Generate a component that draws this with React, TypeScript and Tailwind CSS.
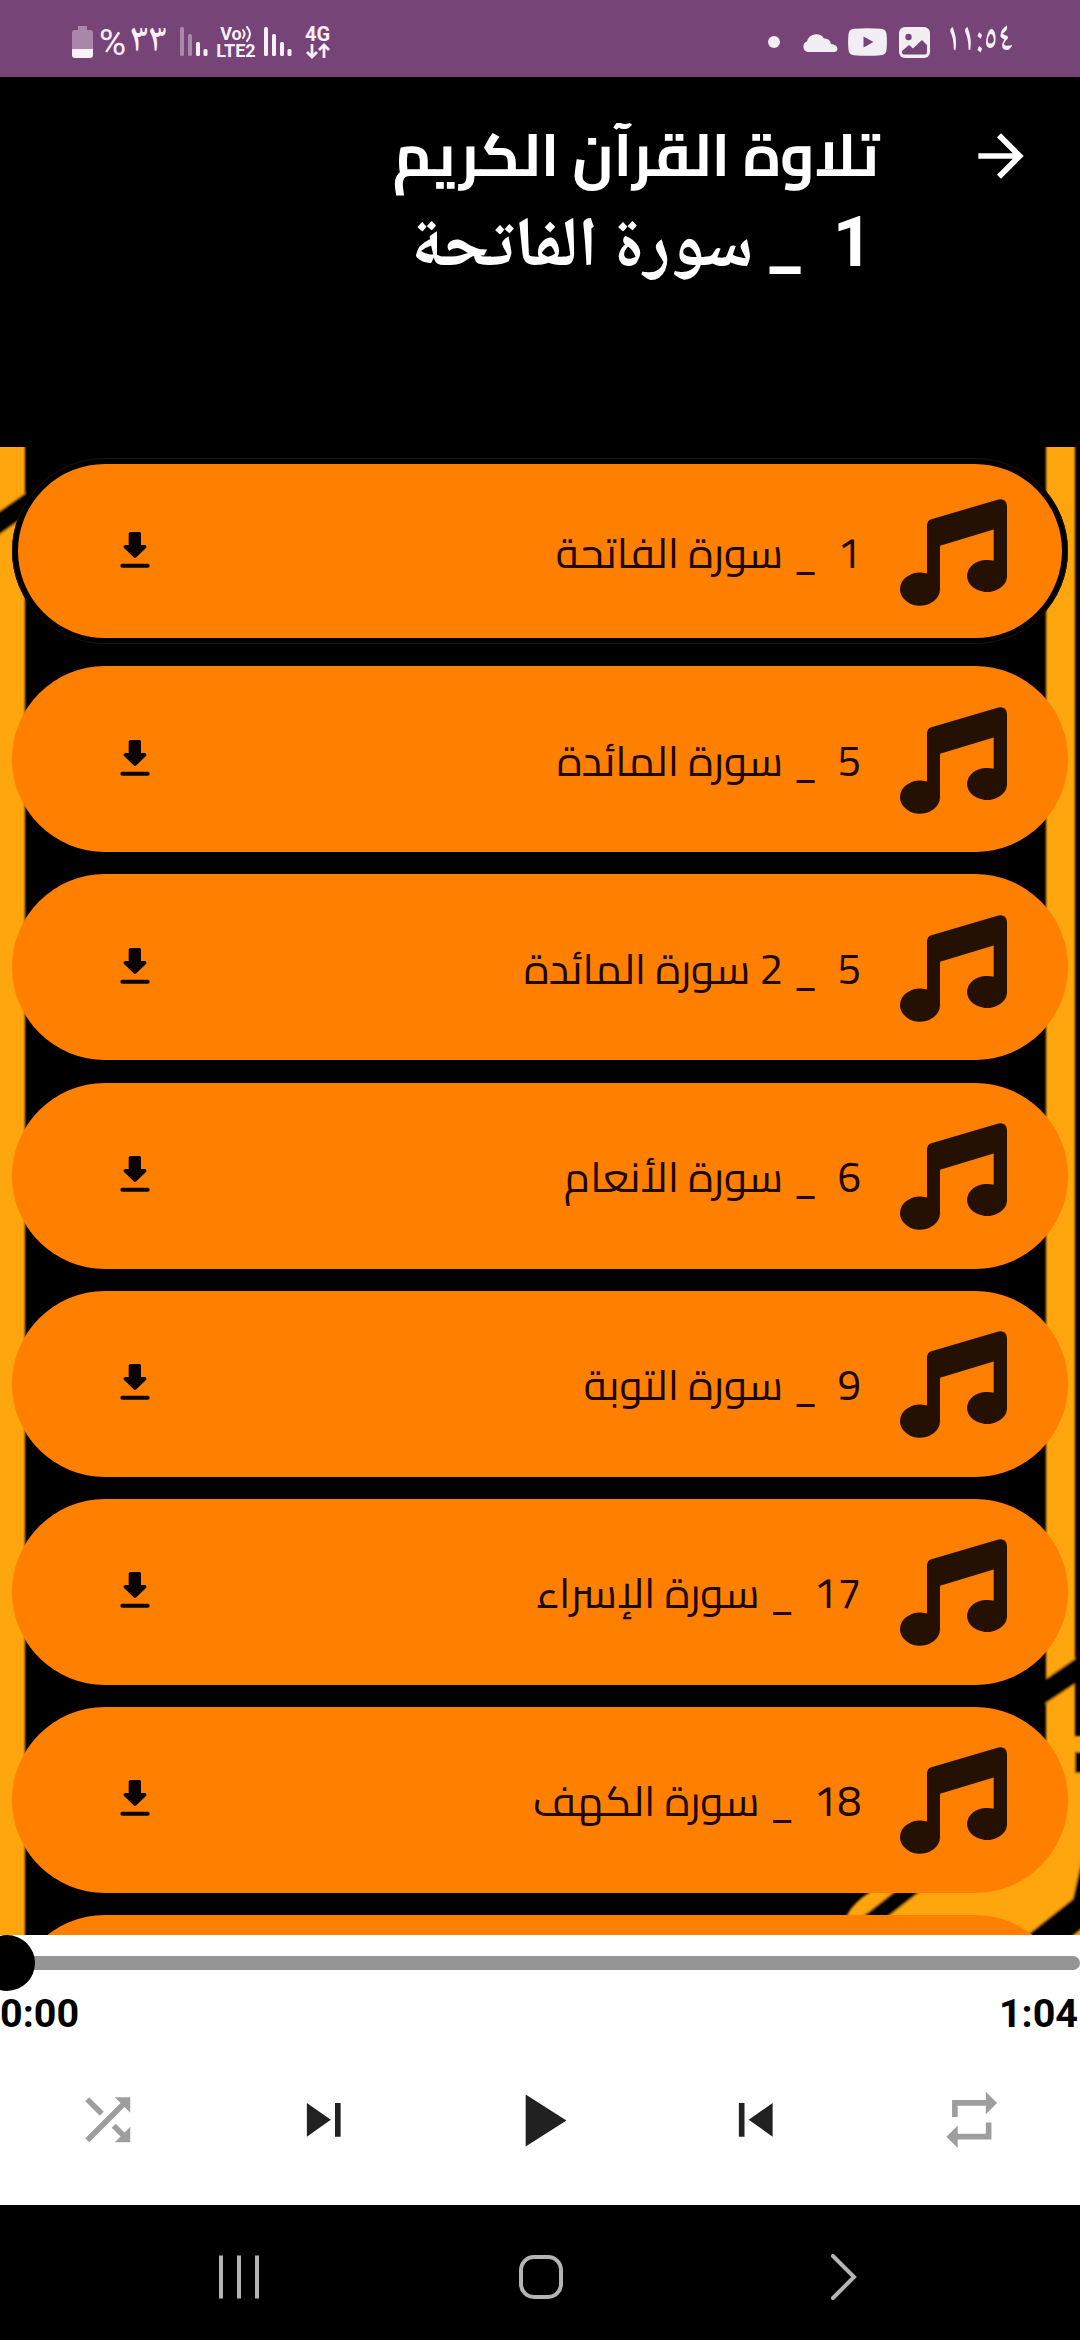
import { MdArrowForward, MdPlayArrow, MdRepeat, MdShuffle, MdSkipNext, MdSkipPrevious } from 'react-icons/md'

const tracks = [
  { id: 1, title: '1  _ سورة الفاتحة' },
  { id: 2, title: '5  _ سورة المائدة' },
  { id: 3, title: '5  _ 2 سورة المائدة' },
  { id: 4, title: '6  _ سورة الأنعام' },
  { id: 5, title: '9  _ سورة التوبة' },
  { id: 6, title: '17  _ سورة الإسراء' },
  { id: 7, title: '18  _ سورة الكهف' },
  { id: 8, title: '' },
]

function SignalBars({ weak }: { weak?: boolean }) {
  return (
    <svg className="h-[30px] w-[28px]" viewBox="0 0 28 30" fill="#fbf0fa">
      <rect x="0" y="0" width="4" height="29" rx="1.5" opacity={weak ? 0.4 : 1} />
      <rect x="8" y="7" width="4" height="22" rx="1.5" opacity={weak ? 0.4 : 1} />
      <rect x="16" y="15" width="4" height="14" rx="1.5" />
      <rect x="23.5" y="22" width="4" height="7" rx="1.5" />
    </svg>
  )
}

function StatusBar() {
  return (
    <div dir="ltr" className="flex h-[77px] items-center justify-between bg-[#764477] pt-[7px] pr-[72px] pl-[72px] text-[#fbf0fa]">
      <div className="flex items-center">
        {/* Battery */}
        <svg className="h-[32px] w-[21px]" viewBox="0 0 21 32">
          <path d="M6 0h9v4h3a3 3 0 0 1 3 3v16H0V7a3 3 0 0 1 3-3h3z" fill="#a986aa" />
          <path d="M0 23h21v6a3 3 0 0 1-3 3H3a3 3 0 0 1-3-3z" fill="#fbf0fa" />
        </svg>
        <span className="ml-[6px] w-[28px] font-['Roboto'] text-[37px] leading-none">%</span>
        <span className="ml-[3px] w-[35px] font-['Noto_Naskh_Arabic','DejaVu_Sans',sans-serif] text-[40px] leading-[40px] font-medium">٣٣</span>
        <div className="ml-[15px] flex">
          <SignalBars weak />
        </div>
        {/* VoLTE */}
        <div className="ml-[8px] flex w-[40px] flex-col items-center font-['Roboto'] text-[18px] leading-[17px] font-bold">
          <div className="flex items-center">
            <span>Vo</span>
            <svg className="h-[16px] w-[10px]" viewBox="0 0 10 16" fill="none" stroke="currentColor" strokeWidth="2">
              <path d="M1 4q3 4 0 8M5 1q6 7 0 14" strokeLinecap="round" />
            </svg>
          </div>
          <span>LTE2</span>
        </div>
        <div className="ml-[8px] flex">
          <SignalBars />
        </div>
        {/* Mobile data */}
        <div className="ml-[12px] flex w-[27px] flex-col items-center font-['Roboto'] text-[20px] leading-[17px] font-bold">
          <span>4G</span>
          <svg className="h-[16px] w-[24px]" viewBox="0 0 24 16" fill="none" stroke="currentColor" strokeWidth="2.8">
            <path d="M6 1v13M1 9l5 5 5-5M18 15V2M13 7l5-5 5 5" />
          </svg>
        </div>
      </div>

      <div className="flex items-center">
        <span className="mr-[22px] h-3 w-3 rounded-full bg-[#f3eef3]" />
        {/* Cloud */}
        <svg className="mr-[10px] h-[20px] w-[36px]" viewBox="0 0 36 20" fill="#f3eef3">
          <path d="M5.500 20a5.500 5.500 0 0 1-.5-10.500A9.500 9.500 0 0 1 22 6.500a6.500 6.500 0 0 1 7 5.500q6 .5 6.500 5-.2 3-3.500 3z" />
        </svg>
        {/* Video */}
        <svg className="mr-[12px] h-[28px] w-[39px]" viewBox="0 0 39 28">
          <path d="M6 .8q13.500-1.300 27 0 5 .5 5.500 5.200.8 8 0 16-.5 4.700-5.500 5.200-13.500 1.300-27 0-5-.5-5.500-5.200-.8-8 0-16Q1 1.300 6 .8z" fill="#f3eef3" />
          <path d="M15.500 8.500v11l10-5.500z" fill="#764477" />
        </svg>
        {/* Photo */}
        <svg className="mr-[16px] h-[31px] w-[31px]" viewBox="0 0 31 31">
          <rect width="31" height="31" rx="6" fill="#f3eef3" />
          <circle cx="9.500" cy="10" r="3.200" fill="#764477" />
          <path d="M3 24l7-6 4 3.500 9-8.500 5 5v7.500q0 2-2 2H5q-2 0-2-2z" fill="#764477" />
        </svg>
        <span className="w-[62px] origin-left scale-x-[0.8] font-['Noto_Naskh_Arabic','DejaVu_Sans',sans-serif] text-[39px] leading-[40px] font-semibold tracking-[-2.6px] whitespace-nowrap">١١:٥٤</span>
      </div>
    </div>
  )
}

function Header() {
  return (
    <header className="flex h-[370px] bg-black pr-[45px] text-white">
      <MdArrowForward className="mt-[45px] h-[68px] w-[68px] shrink-0" />
      <div className="mr-[88px] pt-[34px] font-bold">
        <h1 className="font-['Cairo','DejaVu_Sans',sans-serif] text-[59.2px] leading-[88px]">تلاوة القرآن الكريم</h1>
        <h2 className="-mt-px pr-[6px] font-['Roboto','Noto_Naskh_Arabic','DejaVu_Sans',sans-serif] text-[70px] leading-[88px] [word-spacing:-1.3px] whitespace-pre">1  _ سورة الفاتحة</h2>
      </div>
    </header>
  )
}

// Black wallpaper with amber stripes behind the list
function Wallpaper() {
  return (
    <svg className="absolute inset-0 h-full w-full" viewBox="0 447 1080 1488" preserveAspectRatio="none">
      <defs>
        <filter id="soft" x="-5%" y="-5%" width="110%" height="110%">
          <feGaussianBlur stdDeviation="1.3" />
        </filter>
      </defs>
      <rect y="447" width="1080" height="1488" fill="#000" />
      <g filter="url(#soft)">
        <path d="M-20 420H25V1960H-20z" fill="#ffa50a" />
        <path d="M-10 518L30 490V513L-10 541z" fill="#000" />
        <path d="M1046 420H1075V1736H1100V1960H825L847 1915Q853 1903 870 1892L1046 1760z" fill="#ffa50a" />
        <path d="M1040 1683L1085 1652V1677L1040 1707z" fill="#000" />
        <path d="M1075 1752H1100V1773H1075z" fill="#000" />
        <path d="M1100 1800L1080 1868 1073 1899 1015 1945H1062L1100 1914z" fill="#000" />
        <path d="M893 1893L833 1940H858L918 1893 960 1860H935z" fill="#000" />
      </g>
    </svg>
  )
}

function MusicIcon() {
  return (
    <svg className="h-[107px] w-[107px]" viewBox="0 0 321 320" fill="#241103">
      <path d="M81 77Q82 64 94 60L295 1Q318-3 321 19V234A60 48 0 1 1 281 185V91L120 140V270A60 50 0 1 1 81 223z" />
    </svg>
  )
}

function DownloadIcon() {
  return (
    <svg className="h-[36px] w-[30px]" viewBox="0 0 90 108" fill="#0a0402">
      <path d="M32 0H58Q63 0 63 5V39H74Q82 41 78 48L49 76Q45 80 41 76L12 48Q8 41 16 39H26V5Q26 0 32 0z" />
      <rect x="1" y="95" width="88" height="12" rx="6" />
    </svg>
  )
}

function TrackList() {
  return (
    <main className="relative h-[1488px] overflow-hidden">
      <Wallpaper />
      <ul className="relative flex flex-col gap-[22.1px] px-[12px] pt-[11.3px]">
        {tracks.map((track, i) => (
          <li
            key={track.id}
            className={
              i === 0
                ? 'flex h-[186px] shrink-0 items-center rounded-full border-6 border-black bg-[#ff8000] pt-[2px] pr-[55px] pl-[102px] outline-1 -outline-offset-1 outline-[#1c1408]'
                : 'flex h-[186px] shrink-0 items-center rounded-full bg-[#ff8000] pt-[2px] pr-[61px] pl-[108px]'
            }
          >
            <MusicIcon />
            <span className="mt-[1px] mr-[39px] grow font-['Cairo','DejaVu_Sans',sans-serif] text-[42.1px] leading-[80px] whitespace-pre text-[#1d0700]">{track.title}</span>
            <div className="mb-[5px]">
              <DownloadIcon />
            </div>
          </li>
        ))}
      </ul>
    </main>
  )
}

function Player() {
  return (
    <section dir="ltr" className="h-[270px] overflow-hidden bg-white">
      {/* Seek bar */}
      <div className="flex h-[56px] items-center">
        <div className="z-10 -ml-[21px] h-[56px] w-[56px] shrink-0 rounded-full bg-black" />
        <div className="-ml-1 h-[14px] grow rounded-r-full bg-[#959595]" />
      </div>
      <div className="flex justify-between pr-[2px] font-['Roboto'] text-[39.500px] leading-[46px] font-bold text-black">
        <span>0:00</span>
        <span>1:04</span>
      </div>
      {/* Controls */}
      <div className="grid h-[166px] grid-cols-5 place-items-center text-[#212121]">
        <MdShuffle className="h-[67.5px] w-[67.5px] text-[#9e9e9e]" />
        <MdSkipNext className="h-[67.5px] w-[67.5px]" />
        <MdPlayArrow className="h-[89px] w-[89px]" />
        <MdSkipPrevious className="h-[67.5px] w-[67.5px]" />
        <MdRepeat className="h-[67.5px] w-[67.5px] text-[#9e9e9e]" />
      </div>
    </section>
  )
}

function NavBar() {
  return (
    <nav dir="ltr" className="flex h-[135px] items-center bg-black pt-[9px] pl-[216px]">
      <svg className="h-[46px] w-[46px]" viewBox="0 0 46 46" stroke="#b4b4b4" strokeWidth="4">
        <path d="M5 1.500V44.500M23 1.500V44.500M41 1.500V44.500" />
      </svg>
      <svg className="ml-[256px] h-[46px] w-[46px]" viewBox="0 0 46 46" fill="none" stroke="#b4b4b4" strokeWidth="4">
        <rect x="3" y="3" width="40" height="40" rx="13" />
      </svg>
      <svg className="ml-[266px] h-[46px] w-[30px]" viewBox="0 0 30 46" fill="none" stroke="#b4b4b4" strokeWidth="4">
        <path d="M3 2L24 23 3 44" strokeLinecap="round" />
      </svg>
    </nav>
  )
}

export default function App() {
  return (
    <div dir="rtl" className="h-[2340px] w-[1080px] overflow-hidden bg-black">
      <StatusBar />
      <Header />
      <TrackList />
      <Player />
      <NavBar />
    </div>
  )
}
